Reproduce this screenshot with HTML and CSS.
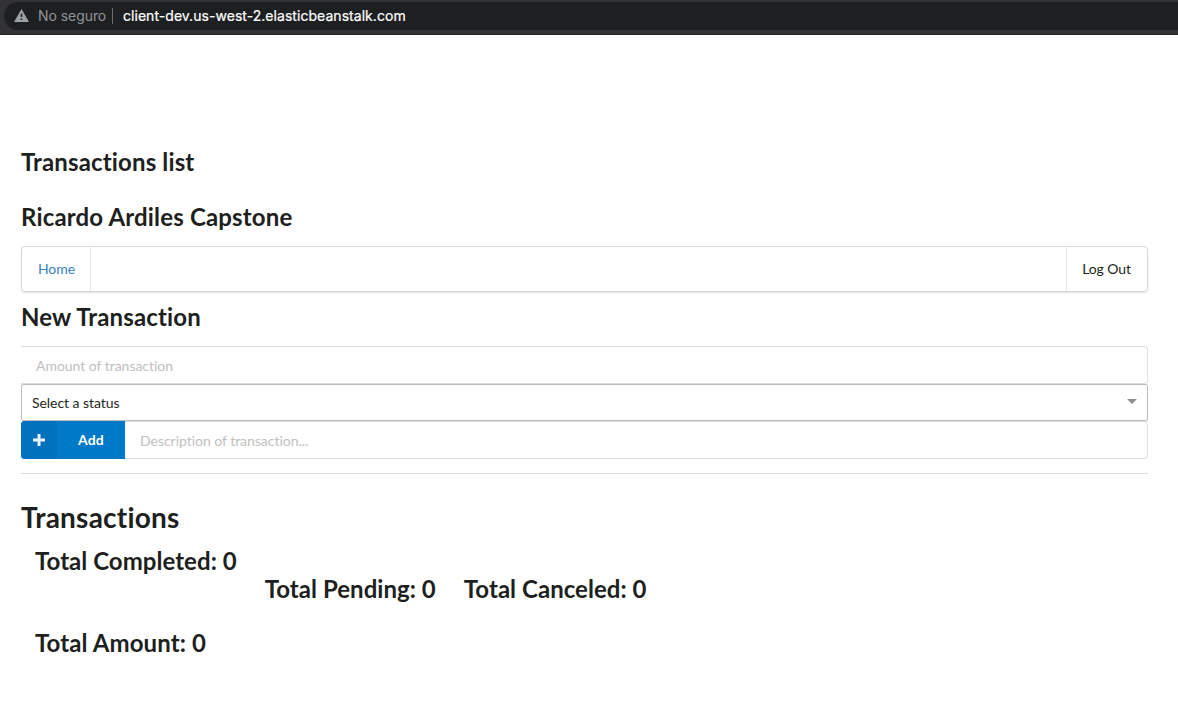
FILE: index.html
```html
<!DOCTYPE html>
<html lang="en">
<head>
<meta charset="utf-8">
<title>Transactions</title>
<link rel="stylesheet" href="styles.css">
</head>
<body>
<header class="browser-bar">
  <div class="address">
    <svg class="warning" viewBox="0 0 15 13"><path fill="#9aa0a6" fill-rule="evenodd" d="M7.5 0 15 13H0ZM6.7 4.8v3.2h1.6V4.8ZM6.7 9.5v1.5h1.6V9.5Z"/></svg>
    <span class="insecure">No seguro</span>
    <span class="separator"></span>
    <span class="url">client-dev.us-west-2.elasticbeanstalk.com</span>
  </div>
</header>
<main class="page">
  <h2 class="list-title">Transactions list</h2>
  <h2 class="owner">Ricardo Ardiles Capstone</h2>
  <nav class="menu"><a class="home">Home</a><a class="logout">Log Out</a></nav>
  <h2 class="new-title">New Transaction</h2>
  <div class="field amount">Amount of transaction</div>
  <div class="select"><span>Select a status</span><svg class="caret" viewBox="0 0 10 5"><path fill="#8d8d8d" d="M0 0h10L5 5z"/></svg></div>
  <div class="action">
    <button class="add"><span class="add-icon"><svg viewBox="0 0 12 12"><path d="M4.5 0h3v4.5H12v3H7.5V12h-3V7.5H0v-3h4.5z" fill="#e9f4fb"/></svg></span><span class="add-label">Add</span></button>
    <div class="field description">Description of transaction...</div>
  </div>
  <hr class="divider">
  <h1 class="heading">Transactions</h1>
  <section class="totals">
    <h2 class="completed">Total Completed: 0</h2>
    <h2 class="lower">Total Pending: 0</h2>
    <h2 class="lower">Total Canceled: 0</h2>
  </section>
  <h2 class="total-amount">Total Amount: 0</h2>
</main>
</body>
</html>
```
FILE: styles.css
```css
* { box-sizing: border-box; }
body { margin: 0; background: #fff; color: #1e1f20; font: 14px/20px Lato, sans-serif; font-variant-ligatures: none; letter-spacing: -.03px; }
h1, h2 { margin: 0; font-weight: 700; white-space: nowrap; }
h2 { font-size: 24px; line-height: 30px; letter-spacing: .14px; }
.browser-bar { height: 35px; background: #323236; border-bottom: 1px solid #242326; padding: 2px 0 0 4px; }
.address { height: 28px; background: #1e1f21; border-radius: 14px 0 0 14px; display: flex; align-items: center; padding-left: 10px; font: 14px/20px Inter, sans-serif; letter-spacing: 0; }
.warning { width: 15px; height: 13px; margin-bottom: 1px; }
.insecure { color: #8f9498; width: 68px; margin-left: 9px; white-space: nowrap; letter-spacing: -.06px; }
.separator { width: 1px; height: 16px; background: #6a6c70; margin: 0 10px 0 6px; }
.url { color: #fff; letter-spacing: .045px; -webkit-text-stroke: .2px #fff; }
.page { padding: 112px 30px 0 21px; }
.owner { margin-top: 25px; letter-spacing: .16px; }
.menu { height: 46px; margin-top: 14px; border: 1px solid #d9d9da; border-radius: 4px; box-shadow: 0 1px 2px rgba(34,36,38,.15); display: flex; justify-content: space-between; }
.menu a { display: flex; align-items: center; justify-content: center; }
.home { width: 69px; border-right: 1px solid #e6e6e6; color: #3580bf; padding-left: 1px; }
.logout { width: 81px; border-left: 1px solid #e6e6e6; letter-spacing: -.1px; padding-right: 1px; }
.new-title { margin-top: 10px; }
.field { height: 38px; border: 1px solid #dededf; border-left: 0; border-radius: 0 4px 4px 0; padding: 9px 15px; color: #c0c0c1; }
.amount { margin-top: 14px; }
.select { height: 37px; border: 1px solid #bcbcbc; border-radius: 2px; display: flex; align-items: center; justify-content: space-between; padding: 0 10px; letter-spacing: -.06px; }
.caret { width: 10px; height: 5px; margin-bottom: 2px; }
.action { display: flex; height: 38px; }
.add { width: 104px; padding: 0; border: 0; border-radius: 4px 0 0 4px; background: #0079c9; color: #fff; font: 700 14px/37px Lato, sans-serif; display: flex; }
.add-icon { width: 36px; height: 38px; background: #0072bd; display: flex; align-items: center; justify-content: center; border-radius: 4px 0 0 4px; }
.add-icon svg { width: 12px; height: 12px; }
.add-label { flex: 1; text-align: center; letter-spacing: .1px; }
.description { flex: 1; }
.divider { margin: 14px 0 0; border: 0; height: 1px; background: #dcdcdc; }
.heading { margin-top: 25px; font-size: 28px; line-height: 36px; letter-spacing: .22px; }
.totals { display: flex; height: 58px; margin: 11px 0 0 14px; gap: 28px; }
.totals h2 { letter-spacing: .04px; }
.lower { padding-top: 28px; }
.total-amount { margin: 24px 0 0 14px; letter-spacing: .1px; }
```
